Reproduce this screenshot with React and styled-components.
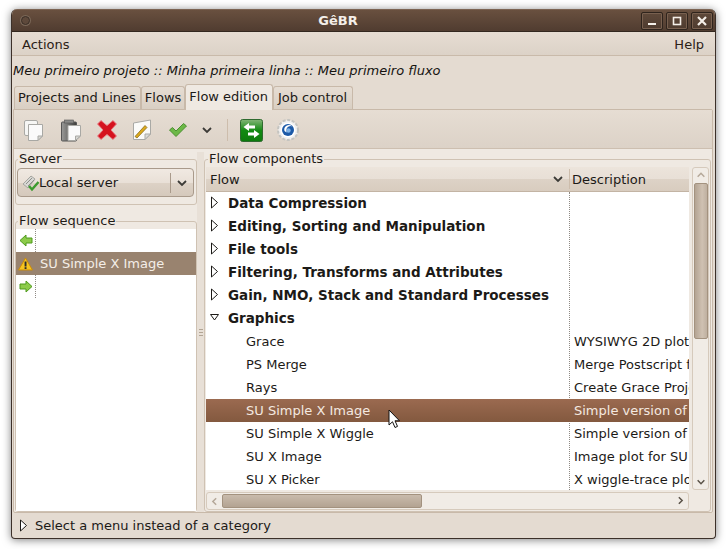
import React from "react";
import styled, { createGlobalStyle } from "styled-components";

const GlobalStyle = createGlobalStyle`
  html, body {
    margin: 0;
    padding: 0;
    background: #fff;
  }
  body {
    width: 726px;
    height: 549px;
    overflow: hidden;
    font-family: "DejaVu Sans", sans-serif;
    font-size: 13px;
    color: #1c1a17;
  }
`;

const categories = [
  "Data Compression",
  "Editing, Sorting and Manipulation",
  "File tools",
  "Filtering, Transforms and Attributes",
  "Gain, NMO, Stack and Standard Processes",
];

const programs = [
  ["Grace", "WYSIWYG 2D plotting tool"],
  ["PS Merge", "Merge Postscript files"],
  ["Rays", "Create Grace Project"],
  ["SU Simple X Image", "Simple version of suximage", true],
  ["SU Simple X Wiggle", "Simple version of suxwigb"],
  ["SU X Image", "Image plot for SU data"],
  ["SU X Picker", "X wiggle-trace plot of data"],
];

const Chevron = ({ size = 12, color = "#3c3b37" }) => (
  <svg width={size} height={size} viewBox="0 0 12 12">
    <path d="M2 4 L6 8 L10 4" fill="none" stroke={color} strokeWidth="1.8" />
  </svg>
);

const Expander = ({ open }) => (
  <svg width="9" height="13" viewBox="0 0 9 13">
    {open ? (
      <path d="M0.5 3.5 H8.5 L4.5 9 Z" fill="#fff" stroke="#1c1a17" />
    ) : (
      <path d="M1.5 1 V12 L7.5 6.5 Z" fill="#fff" stroke="#1c1a17" />
    )}
  </svg>
);

const CopyIcon = () => (
  <svg width="22" height="23" viewBox="0 0 22 23">
    <rect x="1.5" y="1.5" width="13" height="15" rx="1.5" fill="#f6f6f4" stroke="#a9a9a5" />
    <path d="M5.5 5.5 H19.5 V17 L15 21.5 H5.5 Z" fill="#fafafa" stroke="#a8a8a4" strokeLinejoin="round" />
    <path d="M19.5 17 H15 V21.5 Z" fill="#d8d8d4" stroke="#a8a8a4" />
  </svg>
);

const PasteIcon = () => (
  <svg width="22" height="23" viewBox="0 0 22 23">
    <defs>
      <linearGradient id="clipboard" x1="0" x2="1" y1="0" y2="0">
        <stop offset="0" stopColor="#9a9a98" />
        <stop offset="1" stopColor="#3d3d3b" />
      </linearGradient>
    </defs>
    <rect x="1.5" y="3" width="15" height="19" rx="1" fill="url(#clipboard)" stroke="#555" />
    <rect x="4.5" y="1" width="9" height="3" fill="#8a8a88" stroke="#555" strokeWidth="0.6" />
    <path d="M8 6.5 H20.5 V17 L15.5 21.5 H8 Z" fill="#fafafa" stroke="#a8a8a4" />
    <path d="M20.5 17 H15.5 V21.5 Z" fill="#d8d8d4" stroke="#a8a8a4" />
  </svg>
);

const DeleteIcon = () => (
  <svg width="22" height="22" viewBox="0 0 22 22">
    <path
      d="M5 1.5 L11 6.5 L17 1.5 L20.5 5 L15 11 L20.5 17 L17 20.5 L11 15.5 L5 20.5 L1.5 17 L7 11 L1.5 5 Z"
      fill="#d5121e"
      stroke="#e88088"
      strokeWidth="1"
      strokeLinejoin="round"
    />
  </svg>
);

const EditIcon = () => (
  <svg width="20" height="22" viewBox="0 0 20 22">
    <path d="M1.5 4 L18.5 1 V15 L13 20.5 H1.5 Z" fill="#fbfbf9" stroke="#a9a9a5" />
    <path d="M18.5 15 H13 V20.5 Z" fill="#dcdcd8" stroke="#a9a9a5" />
    <path d="M3 17.5 L5 19 L15 8.5 L13 6.5 Z" fill="#dcaa1e" stroke="#7d6010" strokeWidth="0.7" />
  </svg>
);

const CheckIcon = () => (
  <svg width="20" height="16" viewBox="0 0 20 16">
    <path
      d="M1.5 8 L4.5 5.5 L8 9 L15.5 1.5 L18.5 4 L8 14.5 Z"
      fill="#6cb847"
      stroke="#4c8f32"
      strokeLinejoin="round"
    />
  </svg>
);

const SwapIcon = () => (
  <svg width="23" height="23" viewBox="0 0 23 23">
    <defs>
      <linearGradient id="swap" x1="0" x2="0" y1="0" y2="1">
        <stop offset="0" stopColor="#84b578" />
        <stop offset="0.5" stopColor="#128a12" />
        <stop offset="1" stopColor="#0d7a0d" />
      </linearGradient>
    </defs>
    <rect x="0.5" y="0.5" width="22" height="22" rx="2" fill="url(#swap)" stroke="#2f6a2f" />
    <path d="M9 4 L3.5 8 L9 12 V9.5 H15 V6.5 H9 Z" fill="#fff" />
    <path d="M14 11 L19.5 15 L14 19 V16.5 H8 V13.5 H14 Z" fill="#fff" />
  </svg>
);

const GearIcon = () => (
  <svg width="24" height="24" viewBox="0 0 24 24">
    <circle cx="12" cy="12" r="10" fill="#f0f0f0" stroke="#c4c4c0" strokeWidth="2" strokeDasharray="3 1.6" />
    <circle cx="12" cy="12" r="7.5" fill="#fff" />
    <circle cx="12" cy="12" r="6" fill="#1c5aa8" />
    <path d="M8.5 13 A4.5 4.5 0 0 1 16 8.5 A4 4 0 0 0 10.5 11 V14.5 Z" fill="#fff" />
    <circle cx="12.5" cy="12.5" r="2.2" fill="#7fb2e6" />
  </svg>
);

const ServerIcon = () => (
  <svg width="18" height="18" viewBox="0 0 18 18">
    <path d="M1 10 L9 2 L13 5 L6 14 Z" fill="#d8d8d4" stroke="#a5a5a0" />
    <path d="M4 10 L10 4 M6 12 L12 6" stroke="#8f8f8a" />
    <path d="M7 12 L10 15.5 L16.5 8" fill="none" stroke="#3c9a2e" strokeWidth="2.4" />
  </svg>
);

const WarningIcon = () => (
  <svg width="15" height="14" viewBox="0 0 15 14">
    <path d="M7.5 1 L14.5 13 H0.5 Z" fill="#f6c520" stroke="#c98a0c" strokeLinejoin="round" />
    <rect x="6.6" y="4.5" width="1.9" height="5" fill="#2a2a2a" />
    <rect x="6.6" y="10.2" width="1.9" height="1.8" fill="#2a2a2a" />
  </svg>
);

const ArrowSvg = styled.svg`
  transform: ${(p) => (p.$flip ? "scaleX(-1)" : "none")};
`;

const ArrowIcon = ({ flip }) => (
  <ArrowSvg $flip={flip} width="14" height="13" viewBox="0 0 14 13">
    <path
      d="M1 4 H7 V1 L13 6.5 L7 12 V9 H1 Z"
      fill="#8ccb4a"
      stroke="#4e9a1c"
      strokeLinejoin="round"
    />
  </ArrowSvg>
);

const Window = styled.div`
  width: 705px;
  height: 530px;
  margin: 9px 0 0 11px;
  border-radius: 6px 6px 4px 4px;
  background: #e4dbd1;
  box-shadow: 0 1px 9px rgba(0, 0, 0, 0.5);
  display: flex;
  flex-direction: column;
  overflow: hidden;
  border: 1px solid #3c3029;
  border-top: none;
  box-sizing: border-box;
`;

const TitleBar = styled.div`
  height: 23px;
  flex: none;
  display: flex;
  align-items: center;
  padding: 0 2px 0 9px;
  background: linear-gradient(#69503f, #503c30);
  border-top: 1px solid #7c6453;
  border-bottom: 1px solid #33281f;
  box-sizing: border-box;
`;

const CloseDot = styled.div`
  width: 7px;
  height: 7px;
  border-radius: 50%;
  border: 1px solid #3a2e26;
  background: #5e493b;
  box-shadow: 0 0 0 1px #7a6757;
`;

const Title = styled.div`
  flex: 1;
  text-align: center;
  font-weight: bold;
  font-size: 13px;
  color: #f4efe9;
  padding-left: 5px;
`;

const WinButtons = styled.div`
  display: flex;
  gap: 3px;
`;

const WinButton = styled.div`
  width: 20px;
  height: 16px;
  border: 1px solid #2f241d;
  box-shadow: inset 0 0 0 1px #78604f;
  border-radius: 2px;
  display: grid;
  place-items: center;
  background: linear-gradient(#5f493a, #4e3b2f);
`;

const MenuBar = styled.div`
  height: 24px;
  flex: none;
  display: flex;
  justify-content: space-between;
  align-items: center;
  padding: 2px 11px 0 10px;
  background: linear-gradient(#e6ddd3, #dcd2c7);
  border-bottom: 1px solid #c9baaa;
  box-sizing: border-box;
`;

const MenuItem = styled.div`
  color: #2b2117;
`;

const Breadcrumb = styled.div`
  height: 28px;
  flex: none;
  display: flex;
  align-items: center;
  padding-left: 1px;
  font-style: italic;
  color: #151310;
`;

const TabBar = styled.div`
  display: flex;
  align-items: flex-end;
  height: 25px;
  flex: none;
  padding-left: 2px;
  box-sizing: border-box;
`;

const Tab = styled.div`
  height: ${(p) => (p.$active ? "26px" : "23px")};
  padding: 0 ${(p) => p.$right || 3}px 2px ${(p) => p.$left || 3}px;
  display: flex;
  align-items: center;
  box-sizing: border-box;
  border: 1px solid #c8b9a9;
  border-bottom: none;
  border-radius: 3px 3px 0 0;
  background: ${(p) => (p.$active ? "#efe9e2" : "linear-gradient(#e6ddd3, #d9cfc3)")};
  position: ${(p) => (p.$active ? "relative" : "static")};
  margin-bottom: ${(p) => (p.$active ? "-1px" : "0")};
  z-index: ${(p) => (p.$active ? 1 : 0)};
`;

const Notebook = styled.div`
  flex: 1;
  margin: 0 2px 0 1px;
  border: 1px solid #c8b9a9;
  border-radius: 0 2px 2px 2px;
  background: #efe9e2;
  display: flex;
  flex-direction: column;
  min-height: 0;
`;

const Toolbar = styled.div`
  height: 39px;
  flex: none;
  display: flex;
  align-items: center;
  padding: 2px 0 0 9px;
  background: linear-gradient(#e6ddd3, #dcd2c7);
  border-bottom: 1px solid #cdbfb0;
  box-sizing: border-box;
`;

const ToolButton = styled.div`
  width: ${(p) => p.$w || 36}px;
  flex: none;
  display: flex;
  align-items: center;
`;

const ToolSeparator = styled.div`
  width: 1px;
  height: 22px;
  background: #cdbdac;
  margin: 0 12px 0 4px;
`;

const Panes = styled.div`
  flex: 1;
  min-height: 0;
  display: flex;
  padding: 3px 1px 0 1px;
`;

const LeftColumn = styled.div`
  width: 182px;
  flex: none;
  display: flex;
  flex-direction: column;
`;

const Handle = styled.div`
  width: 7px;
  flex: none;
  display: flex;
  flex-direction: column;
  justify-content: center;
  align-items: center;
  gap: 2px;
  background: #e8e0d7;
`;

const HandleDot = styled.div`
  width: 4px;
  height: 1px;
  background: #b3a595;
`;

const Frame = styled.div`
  position: relative;
  border: 1px solid #cfc2b3;
  border-radius: 3px;
  box-sizing: border-box;
  padding: ${(p) => p.$padding || "1px"};
  margin-top: 7px;
  margin-bottom: ${(p) => p.$mb || 0}px;
  flex: ${(p) => p.$flex || "none"};
  min-height: 0;
  display: flex;
  flex-direction: ${(p) => p.$direction || "column"};
`;

const Legend = styled.div`
  position: absolute;
  top: -9px;
  left: ${(p) => p.$left ?? 3}px;
  line-height: 15px;
  padding: 0 1px;
  background: #efe9e2;
  color: #1f1b17;
`;

const Combo = styled.div`
  height: 29px;
  box-sizing: border-box;
  margin-right: 1px;
  display: flex;
  align-items: center;
  border: 1px solid #a99a8b;
  border-radius: 4px;
  background: linear-gradient(#f0e9e2 0%, #e9e0d7 50%, #ddd2c6 52%, #d5c9bc 100%);
  padding-left: 4px;
`;

const ComboLabel = styled.div`
  flex: 1;
  margin-left: -1px;
`;

const ComboSplit = styled.div`
  width: 22px;
  height: 20px;
  display: grid;
  place-items: center;
  border-left: 1px solid #a99a8b;
`;

const SequenceList = styled.div`
  flex: 1;
  background: #fff;
  display: flex;
  flex-direction: column;
`;

const SequenceRow = styled.div`
  height: 23px;
  display: grid;
  grid-template-columns: 20px 1fr;
  background: ${(p) => (p.$selected ? "#99836f" : "transparent")};
  color: ${(p) => (p.$selected ? "#f4eee8" : "inherit")};
`;

const SequenceIcon = styled.div`
  display: flex;
  justify-content: center;
  align-items: center;
  border-right: 1px dotted ${(p) => (p.$selected ? "transparent" : "#8f8a84")};
`;

const SequenceName = styled.span`
  padding-left: 4px;
  align-self: center;
`;

const RightColumn = styled.div`
  flex: 1;
  min-width: 0;
  display: flex;
`;

const TreeWrap = styled.div`
  flex: 1;
  min-width: 0;
  display: grid;
  grid-template-columns: 1fr 17px;
  grid-template-rows: 1fr 18px;
  column-gap: 3px;
  row-gap: 2px;
  min-height: 0;
`;

const Tree = styled.div`
  min-width: 0;
  min-height: 0;
  display: flex;
  flex-direction: column;
  overflow: hidden;
  background: #fff;
`;

const TreeHeader = styled.div`
  height: 25px;
  flex: none;
  display: grid;
  grid-template-columns: 364px 1fr;
  background: linear-gradient(#ece4db 0%, #e8dfd6 50%, #ddd2c6 52%, #d8ccbf 100%);
  border-bottom: 1px solid #c3b4a4;
  box-sizing: border-box;
`;

const HeaderCell = styled.div`
  display: flex;
  align-items: center;
  justify-content: space-between;
  padding: 0 6px 0 ${(p) => (p.$divider ? 4 : 2)}px;
  box-shadow: ${(p) => (p.$divider ? "inset -1px 0 0 #cdbdac" : "none")};
  margin: 2px 0;
`;

const TreeBody = styled.div`
  flex: 1;
  position: relative;
  overflow: hidden;
`;

const ColumnRule = styled.div`
  position: absolute;
  top: 0;
  bottom: 0;
  left: 363px;
  width: 0;
  border-left: 1px dotted #8f8a84;
`;

const TreeRow = styled.div`
  position: relative;
  height: 23px;
  display: grid;
  grid-template-columns: 364px 1fr;
  align-items: center;
  white-space: nowrap;
  background: ${(p) => (p.$selected ? "linear-gradient(#9b6a50, #83593f)" : "transparent")};
  color: ${(p) => (p.$selected ? "#f4e9e0" : "inherit")};
`;

const RowName = styled.div`
  display: flex;
  align-items: center;
  padding-left: ${(p) => p.$indent}px;
  padding-bottom: ${(p) => (p.$bold ? "2px" : "0")};
  font-weight: ${(p) => (p.$bold ? "bold" : "normal")};
  font-size: ${(p) => (p.$bold ? "13.5px" : "13px")};
`;

const RowDesc = styled.div`
  padding-left: 4px;
  overflow: hidden;
`;

const ExpanderSlot = styled.div`
  width: 22px;
  padding-left: 4px;
  box-sizing: border-box;
  display: flex;
  align-items: center;
`;

const Cursor = styled.svg`
  position: absolute;
  left: 182px;
  top: 10px;
`;

const VScroll = styled.div`
  border: 1px solid #d6cabc;
  border-radius: 3px;
  background: #f1ece6;
  display: flex;
  flex-direction: column;
  align-items: center;
  box-sizing: border-box;
  min-height: 0;
`;

const ArrowCap = styled.div`
  height: 15px;
  flex: none;
  display: grid;
  place-items: center;
  transform: ${(p) => (p.$up ? "rotate(180deg)" : "none")};
`;

const VThumb = styled.div`
  width: 14px;
  height: 156px;
  flex: none;
  border: 1px solid #a3927f;
  border-radius: 2px;
  box-sizing: border-box;
  background: linear-gradient(90deg, #b4a493, #cfc1b2 60%, #bfb0a0);
`;

const Spacer = styled.div`
  flex: 1;
`;

const HScroll = styled.div`
  height: 18px;
  border: 1px solid #d6cabc;
  border-radius: 3px;
  background: #f1ece6;
  display: flex;
  align-items: center;
  box-sizing: border-box;
`;

const SideCap = styled.div`
  width: 15px;
  flex: none;
  display: grid;
  place-items: center;
  transform: ${(p) => (p.$left ? "rotate(90deg)" : "rotate(-90deg)")};
`;

const HThumb = styled.div`
  width: 200px;
  height: 14px;
  flex: none;
  border: 1px solid #a3927f;
  border-radius: 2px;
  box-sizing: border-box;
  background: linear-gradient(#c9bbac, #b3a392);
`;

const StatusBar = styled.div`
  height: 25px;
  flex: none;
  display: flex;
  align-items: center;
  gap: 7px;
  padding-left: 7px;
`;

export default function App() {
  return (
    <>
      <GlobalStyle />
      <Window>
        <TitleBar>
          <CloseDot />
          <Title>GêBR</Title>
          <WinButtons>
            <WinButton>
              <svg width="10" height="10" viewBox="0 0 10 10">
                <rect x="1" y="7" width="8" height="2" fill="#f4efe9" />
              </svg>
            </WinButton>
            <WinButton>
              <svg width="10" height="10" viewBox="0 0 10 10">
                <rect x="1.5" y="1.5" width="7" height="7" fill="none" stroke="#f4efe9" strokeWidth="1.6" />
              </svg>
            </WinButton>
            <WinButton>
              <svg width="10" height="10" viewBox="0 0 10 10">
                <path d="M1 1 L9 9 M9 1 L1 9" stroke="#f4efe9" strokeWidth="2.2" />
              </svg>
            </WinButton>
          </WinButtons>
        </TitleBar>
        <MenuBar>
          <MenuItem>Actions</MenuItem>
          <MenuItem>Help</MenuItem>
        </MenuBar>
        <Breadcrumb>Meu primeiro projeto :: Minha primeira linha :: Meu primeiro fluxo</Breadcrumb>
        <TabBar>
          <Tab $right={4}>Projects and Lines</Tab>
          <Tab>Flows</Tab>
          <Tab $active $right={4}>Flow edition</Tab>
          <Tab $left={4} $right={5}>Job control</Tab>
        </TabBar>
        <Notebook>
          <Toolbar>
            <ToolButton $w={37}><CopyIcon /></ToolButton>
            <ToolButton><PasteIcon /></ToolButton>
            <ToolButton><DeleteIcon /></ToolButton>
            <ToolButton><EditIcon /></ToolButton>
            <ToolButton $w={33}><CheckIcon /></ToolButton>
            <ToolButton $w={22}><Chevron /></ToolButton>
            <ToolSeparator />
            <ToolButton><SwapIcon /></ToolButton>
            <ToolButton><GearIcon /></ToolButton>
          </Toolbar>
          <Panes>
            <LeftColumn>
              <Frame $padding="8px 1px 7px 1px" $mb={9}>
                <Legend $left={2}>Server</Legend>
                <Combo>
                  <ServerIcon />
                  <ComboLabel>Local server</ComboLabel>
                  <ComboSplit><Chevron /></ComboSplit>
                </Combo>
              </Frame>
              <Frame $padding="7px 0 0 0" $flex="1">
                <Legend $left={2}>Flow sequence</Legend>
                <SequenceList>
                  <SequenceRow>
                    <SequenceIcon><ArrowIcon flip /></SequenceIcon>
                  </SequenceRow>
                  <SequenceRow $selected>
                    <SequenceIcon $selected><WarningIcon /></SequenceIcon>
                    <SequenceName>SU Simple X Image</SequenceName>
                  </SequenceRow>
                  <SequenceRow>
                    <SequenceIcon><ArrowIcon /></SequenceIcon>
                  </SequenceRow>
                </SequenceList>
              </Frame>
            </LeftColumn>
            <Handle>
              <HandleDot />
              <HandleDot />
              <HandleDot />
            </Handle>
            <RightColumn>
              <Frame $padding="7px 1px 1px 1px" $flex="1" $direction="row">
                <Legend>Flow components</Legend>
                <TreeWrap>
                  <Tree>
                    <TreeHeader>
                      <HeaderCell $divider>
                        <span>Flow</span>
                        <Chevron />
                      </HeaderCell>
                      <HeaderCell>Description</HeaderCell>
                    </TreeHeader>
                    <TreeBody>
                      <ColumnRule />
                      {categories.map((name) => (
                        <TreeRow key={name}>
                          <RowName $indent={0} $bold>
                            <ExpanderSlot><Expander /></ExpanderSlot>
                            {name}
                          </RowName>
                        </TreeRow>
                      ))}
                      <TreeRow>
                        <RowName $indent={0} $bold>
                          <ExpanderSlot><Expander open /></ExpanderSlot>
                          Graphics
                        </RowName>
                      </TreeRow>
                      {programs.map(([name, desc, selected]) => (
                        <TreeRow key={name} $selected={selected}>
                          <RowName $indent={40}>{name}</RowName>
                          <RowDesc>{desc}</RowDesc>
                          {selected && (
                            <Cursor width="14" height="21" viewBox="0 0 14 21">
                              <path
                                d="M1 1 V16 L4.5 12.8 L7 18.5 L9.5 17.4 L7 11.8 H11.5 Z"
                                fill="#fff"
                                stroke="#111"
                                strokeWidth="1"
                                strokeLinejoin="round"
                              />
                            </Cursor>
                          )}
                        </TreeRow>
                      ))}
                    </TreeBody>
                  </Tree>
                  <VScroll>
                    <ArrowCap $up><Chevron size={10} color="#b5a899" /></ArrowCap>
                    <VThumb />
                    <Spacer />
                    <ArrowCap><Chevron size={10} color="#5a5248" /></ArrowCap>
                  </VScroll>
                  <HScroll>
                    <SideCap $left><Chevron size={10} color="#b5a899" /></SideCap>
                    <HThumb />
                    <Spacer />
                    <SideCap><Chevron size={10} color="#5a5248" /></SideCap>
                  </HScroll>
                </TreeWrap>
              </Frame>
            </RightColumn>
          </Panes>
        </Notebook>
        <StatusBar>
          <Expander />
          <span>Select a menu instead of a category</span>
        </StatusBar>
      </Window>
    </>
  );
}
